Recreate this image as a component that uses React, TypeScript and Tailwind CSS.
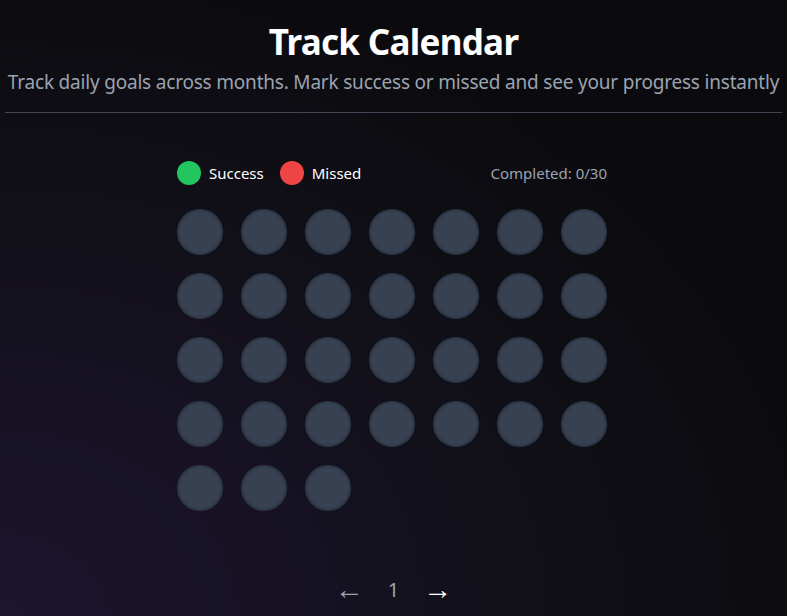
import React from "react";

export default function App() {
  const days = Array.from({ length: 31 }, (_, i) => i + 1);
  return (
    <div
      className="w-[787px] h-[616px] overflow-hidden text-white bg-[radial-gradient(ellipse_at_0%_100%,#1c1530_0%,#121019_45%,#0b0b0f_75%)]"
      style={{ fontFamily: '"Noto Sans", "Open Sans", sans-serif' }}
    >
      <div className="flex flex-col items-center px-[5px]">
        <h1 className="mt-[19px] text-[35px] leading-[46px] font-bold tracking-[-0.7px]">Track Calendar</h1>
        <p className="mt-[3px] text-[19px] leading-[28px] text-[#9ca3af] tracking-[-0.2px] whitespace-nowrap">
          Track daily goals across months. Mark success or missed and see your progress instantly
        </p>
        <div className="mt-[16px] h-px w-full bg-[#3f4654]" />
      </div>
      <div className="ml-[177px] w-[430px] mt-[48px]">
        <div className="flex items-center justify-between h-[24px]">
          <div className="flex items-center">
            <span className="w-6 h-6 rounded-full bg-[#22c55e]" />
            <span className="ml-2 text-[15px] text-white">Success</span>
            <span className="ml-4 w-6 h-6 rounded-full bg-[#ef4444]" />
            <span className="ml-2 text-[15px] text-white">Missed</span>
          </div>
          <span className="text-[15px] text-[#9ca3af]">Completed: 0/30</span>
        </div>
        <div className="mt-[24px] grid grid-cols-[repeat(7,46px)] gap-[18px]">
          {days.map((d) => (
            <div key={d} className="w-[46px] h-[46px] rounded-full bg-[#374151] border-2 border-[#2e3746]" />
          ))}
        </div>
      </div>
      <div className="mt-[57px] flex items-center justify-center gap-[24px] text-[29px] leading-[36px]">
        <span className="text-[#9ca3af]">←</span>
        <span className="text-[#9ca3af] text-[20px] pt-[4px]">1</span>
        <span className="text-white font-bold">→</span>
      </div>
    </div>
  );
}
